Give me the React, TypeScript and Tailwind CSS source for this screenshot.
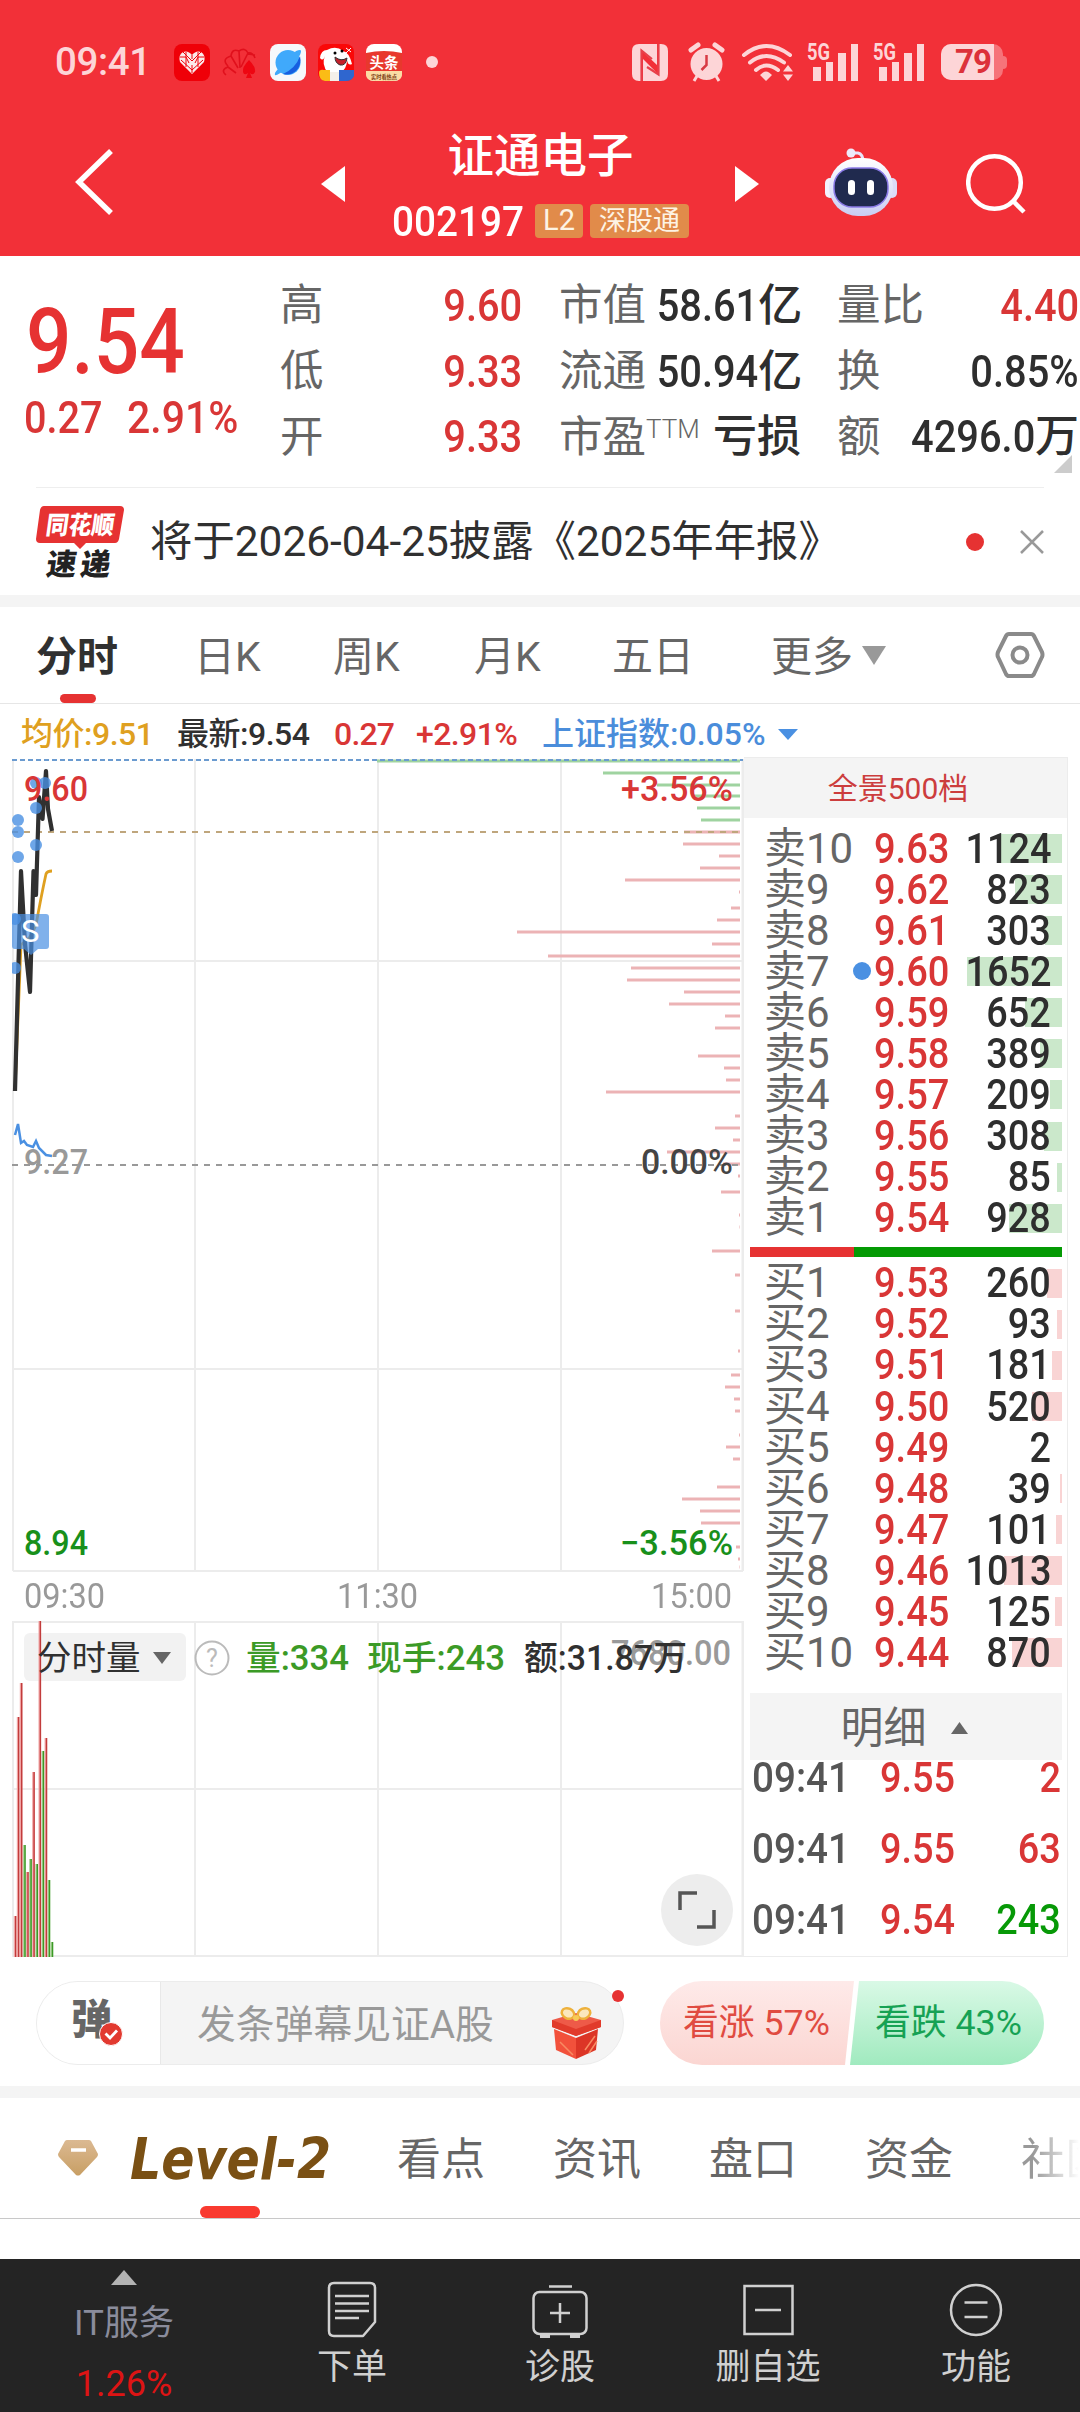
import type { ReactNode } from "react";
import clsx from "clsx";

const sells = [
  { name: "卖10", price: "9.63", qty: 1124 },
  { name: "卖9", price: "9.62", qty: 823 },
  { name: "卖8", price: "9.61", qty: 303 },
  { name: "卖7", price: "9.60", qty: 1652, mark: true },
  { name: "卖6", price: "9.59", qty: 652 },
  { name: "卖5", price: "9.58", qty: 389 },
  { name: "卖4", price: "9.57", qty: 209 },
  { name: "卖3", price: "9.56", qty: 308 },
  { name: "卖2", price: "9.55", qty: 85 },
  { name: "卖1", price: "9.54", qty: 928 },
];

const buys = [
  { name: "买1", price: "9.53", qty: 260 },
  { name: "买2", price: "9.52", qty: 93 },
  { name: "买3", price: "9.51", qty: 181 },
  { name: "买4", price: "9.50", qty: 520 },
  { name: "买5", price: "9.49", qty: 2 },
  { name: "买6", price: "9.48", qty: 39 },
  { name: "买7", price: "9.47", qty: 101 },
  { name: "买8", price: "9.46", qty: 1013 },
  { name: "买9", price: "9.45", qty: 125 },
  { name: "买10", price: "9.44", qty: 870 },
];

const trades = [
  { time: "09:41", price: "9.55", qty: "2", color: "text-[#d93636]" },
  { time: "09:41", price: "9.55", qty: "63", color: "text-[#d93636]" },
  { time: "09:41", price: "9.54", qty: "243", color: "text-[#079907]" },
];

// [y, left x] of every resting-order line, all end at x = 727
const greenDepth = [
  [2, 364], [14, 590], [26, 644], [37, 680], [49, 684], [61, 688],
];
const redDepth = [
  [73, 671], [85, 670], [97, 706], [109, 687], [121, 612], [133, 726],
  [149, 718], [161, 704], [173, 504], [185, 699], [197, 535], [209, 618],
  [221, 614], [233, 671], [245, 656], [257, 712], [269, 702], [297, 685],
  [309, 711], [321, 713], [333, 593], [357, 722], [369, 702], [381, 720],
  [393, 654], [405, 710], [417, 725], [433, 708], [456, 726], [468, 726.5],
  [492, 699], [516, 722], [552, 722], [592, 725], [616, 718], [628, 712],
  [640, 721], [652, 722], [676, 726], [688, 713], [700, 720], [728, 704],
  [740, 669], [752, 687], [764, 688], [788, 723], [800, 725], [808, 726.5],
];

// [x, top y, is up]
const volumes: [number, number, boolean][] = [
  [2, 295, true],
  [5, 96, true],
  [8, 62, true],
  [11.3, 224, false],
  [14.3, 251, true],
  [17.4, 238, false],
  [20.4, 151, true],
  [23.6, 243, false],
  [26.7, 0, true],
  [29.8, 130, false],
  [32.8, 117, true],
  [35.8, 259, false],
  [38.8, 321, false],
];

const StatusBar = () => (
  <div className="flex h-[124px] items-center pl-[55px] pr-[73px] text-[#fdd5d7]">
    <span className="w-[119px] text-[38.500px] font-medium tracking-[-0.400px]">09:41</span>
    <div className="flex gap-3">
      <svg width="36" height="37" viewBox="0 0 36 37">
        <rect width="36" height="37" rx="8" fill="#ef0008" />
        <path d="M18 30 6 18q-2-7 3-10 5-2 9 3 4-5 9-3 5 3 3 10Z" fill="#fbe9ea" />
        <path d="m9 8 9 9 9-9M7 16l11 10 11-10M12 8v15M24 8v15M18 11v4M18 21v8M6 13h6l3 6M30 13h-6l-3 6" stroke="#ef0008" strokeWidth="1" fill="none" />
      </svg>
      <svg width="36" height="37" viewBox="0 0 36 37" fill="none" stroke="#e0101c" strokeWidth="1.600">
        <path d="M4 31q-6-5 2-8l8 6M6 22q-7-7 3-10l7 12M9 12q1-8 8-5l1 17M17 7q6-4 9 2l-7 14M25 9q6-1 8 5M26 10l7 1" />
        <path d="M27 16q7 7 6 12-2 4-5 1l2 5h-6l2-5q-4 3-5-1-1-5 6-12Z" fill="#ee0612" stroke="none" />
      </svg>
      <svg width="36" height="37" viewBox="0 0 36 37">
        <rect width="36" height="37" rx="8" fill="#f6f8fb" />
        <circle cx="18" cy="18.500" r="12.500" fill="#40a9fb" />
        <path d="M30 12q2 9-4 15-6 5-13 3Q26 24 30 12Z" fill="#175fe0" />
        <path d="M26 7q5-2 5 0 0 7-15 18Q7 32 5 31q-1-2 3-6" fill="#40a9fb" />
      </svg>
      <svg width="36" height="37" viewBox="0 0 36 37">
        <rect width="36" height="37" rx="8" fill="#fa0808" />
        <path d="M2 14q1-8 7-8 9-5 16 1 6 1 9 13-4 2-5-4 0 9-7 13H10Q3 20 7 12q-2 6-5 2Z" fill="#fff" />
        <path d="M17 13q6 5 12 1-1 8-7 7-5-2-5-8Z" fill="#c4202a" stroke="#333" />
        <circle cx="17" cy="9" r="1.500" /><circle cx="24" cy="7" r="1.500" />
        <path d="M1 29q0-4 5-3h6v11H7q-6-1-6-8Z" fill="#fbbc16" />
        <path d="M12 28h9v9h-9Z" fill="#f4f0ea" />
        <path d="M21 26h15v6q-2 5-8 5h-7Z" fill="#2f66cf" />
        <path d="m28 4 5 4m0-4-5 5" stroke="#fff" />
      </svg>
      <svg width="36" height="37" viewBox="0 0 36 37">
        <rect width="36" height="37" rx="8" fill="#fff" />
        <path d="M0 9q18-4 36 0v18H0Z" fill="#e8382d" />
        <path d="M0 27h36v3q0 7-8 7H8q-8 0-8-7Z" fill="#fbdca4" />
        <text x="3.500" y="24" fontSize="14.500" fontWeight="700" fill="#fff">头条</text>
        <text x="5" y="34.500" fontSize="5.200" fontWeight="700" fill="#7a3a12">实时看热点</text>
      </svg>
    </div>
    <div className="ml-6 h-3 w-3 rounded-full bg-[#fdd5d7]" />
    <svg className="ml-auto" width="36" height="37" viewBox="0 0 36 37">
      <path d="M7 0h18v21L9 6v31H7q-7 0-7-7V7q0-7 7-7Zm22 0q7 0 7 7v23q0 7-7 7H11V15l16 16V0Z" fill="currentColor" />
      <path d="M9.500 37V6.500L20 15M26.500 0v30.500L15 23" stroke="#e8404a" strokeWidth="2.200" fill="none" />
    </svg>
    <svg className="ml-5" width="37" height="40" viewBox="0 0 37 40">
      <circle cx="18.500" cy="22" r="16" fill="currentColor" />
      <path d="m3 8 7-5M34 8l-7-5" stroke="currentColor" strokeWidth="5" strokeLinecap="round" />
      <path d="m9 34-3 5M28 34l3 5" stroke="currentColor" strokeWidth="3" />
      <path d="M18.500 13v10l-5 5" stroke="#d83a44" strokeWidth="2.500" fill="none" />
    </svg>
    <svg className="ml-4" width="53" height="38" viewBox="0 0 53 38">
      <path d="M3 12q22-18 46 0M9 19.500q16-13 34 0M15 27q10-9 22 0" stroke="currentColor" strokeWidth="4" strokeLinecap="round" fill="none" />
      <path d="m19 32 3-2.500q3-1.800 6 0l3 2.500-6 6ZM47 22l5 6.500H42ZM47 38l5-6.500H42Z" fill="currentColor" />
    </svg>
    <Signal className="ml-[13px]" />
    <Signal className="ml-[14px]" />
    <div className="ml-4 flex items-center">
      <div className="flex h-9 w-[62px] overflow-hidden rounded-[10px] bg-[#f67379]">
        <div className="w-[53px] bg-[#fdd5d7] pl-[11px] text-center text-[33px] font-bold leading-[36px] tracking-[-1px] text-[#dc3139]">
          79
        </div>
      </div>
      <div className="h-[13px] w-1 rounded-r bg-[#f67379]" />
    </div>
  </div>
);

const Signal = ({ className }: { className?: string }) => (
  <svg className={clsx("overflow-visible", className)} width="52" height="40" viewBox="0 0 52 40" fill="currentColor">
    <text x="0" y="17.500" fontSize="23" fontWeight="700" textLength="23" lengthAdjust="spacingAndGlyphs">5G</text>
    <path d="M6 25h8v14H6ZM19 20h7v19h-7ZM31 11h8v28h-8ZM44 2h7v37h-7Z" />
  </svg>
);

const Header = () => (
  <div className="flex h-[132px] items-start text-white">
    <svg className="ml-[74px] mt-[24px]" width="40" height="68" viewBox="0 0 40 68">
      <path d="M37 3 5 34l32 31" stroke="white" strokeWidth="5.500" fill="none" />
    </svg>
    <svg className="ml-[207px] mt-[42px]" width="24" height="36">
      <path d="M24 0v36L0 18Z" fill="white" />
    </svg>
    <div className="ml-[40px] flex w-[311px] flex-col items-center">
      <h1 className="mt-px text-[46.500px] font-medium leading-[62px]">证通电子</h1>
      <div className="mt-[16px] flex h-[36px] w-[297px] items-center">
        <span className="w-[143px] shrink-0 origin-left scale-x-[0.900] text-[43px] font-medium">002197</span>
        <span className="mr-[7px] flex h-[34px] w-[48px] shrink-0 items-center justify-center rounded bg-[#e18b4a] text-[29px] text-[#fdf3e4]">
          L2
        </span>
        <span className="flex h-[34px] w-[99px] shrink-0 items-center justify-center rounded bg-[#e18b4a] text-[27px] text-[#fdf3e4]">
          深股通
        </span>
      </div>
    </div>
    <svg className="ml-[39px] mt-[42px]" width="24" height="36">
      <path d="M0 0v36L24 18Z" fill="white" />
    </svg>
    <svg className="ml-[66px] mt-[24px]" width="72" height="70" viewBox="0 0 72 70">
      <defs>
        <linearGradient id="robot" x1="0" y1="0" x2="0" y2="1">
          <stop offset="0" stopColor="#ffffff" />
          <stop offset="1" stopColor="#c9cdf3" />
        </linearGradient>
      </defs>
      <path d="M26 5h7q5 1 5 9" stroke="#e8e6fb" strokeWidth="3" fill="none" />
      <circle cx="26" cy="5" r="4.500" fill="#eeeafa" />
      <rect x="0" y="30" width="10" height="20" rx="5" fill="#f3f2fd" />
      <rect x="62" y="30" width="10" height="20" rx="5" fill="#dcdcf8" />
      <rect x="4" y="10" width="64" height="58" rx="29" fill="url(#robot)" />
      <rect x="9" y="20" width="54" height="39" rx="18" fill="#202a4e" stroke="#8a7ae6" strokeWidth="1.500" />
      <rect x="23" y="32" width="7" height="15" rx="3.500" fill="white" />
      <rect x="42" y="32" width="7" height="15" rx="3.500" fill="white" />
    </svg>
    <svg className="ml-[69px] mt-[29px]" width="60" height="61" viewBox="0 0 60 61" stroke="white" strokeWidth="4.500" fill="none">
      <circle cx="28.500" cy="29.500" r="26.300" />
      <path d="m47 48 11 11" />
    </svg>
  </div>
);

type StatProps = { label: string; value?: string; unit?: string; red?: boolean; sup?: string };

const Stat = ({ label, value, unit, red, sup }: StatProps) => (
  <div className="flex h-[65.700px] items-center justify-between whitespace-nowrap">
    <span className="text-[43.500px] text-[#666]">
      {label}
      {sup && <sup className="relative -top-[14px] align-baseline text-[26px] font-light">{sup}</sup>}
    </span>
    <span className={clsx("flex text-[44px] font-medium", red ? "text-[#d93636]" : "text-[#2e2e2e]")}>
      {value && <span className="origin-right scale-x-[0.905]">{value}</span>}
      {unit}
    </span>
  </div>
);

const Quote = () => (
  <div className="relative flex h-[231px] pt-[17px]">
    <div className="w-[280px] pl-[24px] font-medium text-[#e63232]">
      <div className="ml-[2px] mt-[22px] w-fit origin-left scale-x-[0.890] text-[90px] leading-[96px]">9.54</div>
      <div className="flex text-[44px] leading-[54px] text-[#d93636]">
        <span className="w-[103px] origin-left scale-x-[0.900]">0.27</span>
        <span className="origin-left scale-x-[0.930]">2.91%</span>
      </div>
    </div>
    <div className="w-[242px]">
      <Stat label="高" value="9.60" red />
      <Stat label="低" value="9.33" red />
      <Stat label="开" value="9.33" red />
    </div>
    <div className="ml-[37px] w-[242px]">
      <Stat label="市值" value="58.61" unit="亿" />
      <Stat label="流通" value="50.94" unit="亿" />
      <Stat label="市盈" unit="亏损" sup="TTM" />
    </div>
    <div className="ml-[36px] w-[242px]">
      <Stat label="量比" value="4.40" red />
      <Stat label="换" value="0.85%" />
      <Stat label="额" value="4296.0" unit="万" />
    </div>
    <svg className="absolute left-[1054px] top-[199px]" width="18" height="18">
      <path d="M18 0v18H0Z" fill="#ccc" />
    </svg>
  </div>
);

const Notice = () => (
  <div className="mx-[36px] flex h-[108px] items-center border-t border-[#eee]">
    <svg className="overflow-visible" width="90" height="72" viewBox="0 0 90 72">
      <path d="M8 0h76q4 0 4 4l-5 29q-1 4-4 4H50l-6 6-6-6H4q-4 0-4-4L4 4q1-4 4-4Z" fill="#e63232" />
      <text x="13" y="28" fontSize="25" fontWeight="900" fill="white" textLength="68" lengthAdjust="spacingAndGlyphs" transform="skewX(-8)">同花顺</text>
      <text x="19" y="69" fontSize="30" fontWeight="900" fill="#222" textLength="64" transform="skewX(-8)">速递</text>
    </svg>
    <p className="ml-[24px] mt-[2px] text-[42.400px] leading-none text-[#303030]">将于2026-04-25披露《2025年年报》</p>
    <div className="ml-auto h-[18px] w-[18px] rounded-full bg-[#e63232]" />
    <svg className="ml-[36px]" width="24" height="24" stroke="#999" strokeWidth="2.500">
      <path d="m1 1 22 22M23 1 1 23" />
    </svg>
  </div>
);

const ChartTabs = () => (
  <div className="flex h-[97px] border-b border-[#e6e6e6] pl-[36px] text-[41px] leading-[100px] text-[#666]">
    <div className="flex w-[158px] flex-col font-bold text-[#303030]">
      <span className="h-[87px]">分时</span>
      <div className="ml-6 h-[9px] w-9 rounded-full bg-[#e63232]" />
    </div>
    <span className="w-[139px]">日K</span>
    <span className="w-[141px]">周K</span>
    <span className="w-[138px]">月K</span>
    <span className="w-[159px]">五日</span>
    <span>更多</span>
    <svg className="ml-[9px] mt-[39px]" width="24" height="19">
      <path d="M0 0h24L12 19Z" fill="#999" />
    </svg>
    <svg className="ml-[109px] mt-[24px]" width="50" height="48" viewBox="0 0 50 48" fill="none" stroke="#8a8a8a" strokeWidth="4">
      <path d="M14 3h22q2 0 3 2l8 16q1 3 0 5l-8 17q-1 2-3 2H14q-2 0-3-2L3 26q-1-2 0-5l8-16q1-2 3-2Z" />
      <circle cx="25" cy="24" r="7.500" />
    </svg>
  </div>
);

const InfoRow = () => (
  <div className="flex h-[53px] items-center pl-[21px] pt-[7px] text-[32px] font-medium">
    <span className="w-[156px] tracking-[-0.500px] text-[#dfa020]">均价:9.51</span>
    <span className="w-[157px] tracking-[-0.500px] text-[#303030]">最新:9.54</span>
    <span className="w-[82px] tracking-[-0.800px] text-[#d93636]">0.27</span>
    <span className="w-[126px] tracking-[-0.600px] text-[#d93636]">+2.91%</span>
    <span className="w-[236px] text-[#4a8ddb]">上证指数:0.05%</span>
    <svg width="20" height="11">
      <path d="M0 0h20L10 11Z" fill="#4a90e2" />
    </svg>
  </div>
);

const ChartText = ({ x, y, width, fill, children }: { x: number; y: number; width: number; fill: string; children: string }) => (
  <text x={x} y={y} fill={fill} textLength={width} lengthAdjust="spacingAndGlyphs">
    {children}
  </text>
);

const PriceChart = () => (
  <svg className="block" width="732" height="816" viewBox="-1 -1 732 816" fontWeight="500" fontSize="34.500">
    <g stroke="#ececec" strokeWidth="2">
      <path d="M0 0V812M182 0V812M365 0V812M548 0V812M0 812H730M0 202H730M0 610H730" />
      <path d="M730 0V812" strokeWidth="3" />
    </g>
    <g stroke="#9fd3a0" strokeWidth="3">
      {greenDepth.map(([y, x]) => (
        <line key={y} x1={x} x2="727" y1={y} y2={y} />
      ))}
    </g>
    <g stroke="#ecb3b5" strokeWidth="3">
      {redDepth.map(([y, x]) => (
        <line key={y} x1={x} x2="727" y1={y} y2={y} />
      ))}
    </g>
    <path d="M-1 1H730" stroke="#6b9bd0" strokeWidth="2" strokeDasharray="5 3" />
    <path d="M-1 73H727" stroke="#bfa67c" strokeWidth="2" strokeDasharray="6 6" />
    <path d="M-1 406H727" stroke="#999" strokeWidth="2" strokeDasharray="6 6" />
    <path d="M2 332 8 186 17 178 23 166Q28 138 33 115 34 112 39 112" stroke="#dfa020" strokeWidth="2.800" fill="none" />
    <path d="M2 332 8 112 12 185 17 233 20.500 112 23 136 26 38 29.500 60 33 12 35 50 39 72" stroke="#303030" strokeWidth="4.200" strokeLinejoin="round" fill="none" />
    <path d="m2 376 3-11 3 19 3-2 3 4 6 2 3-6 3 7 7 7 6 1" stroke="#4a90e2" strokeWidth="2.500" fill="none" />
    <g fill="#4a90e2" fillOpacity="0.800">
      {[[5, 61], [5, 73], [5, 98], [23, 49], [23, 86], [23, 24], [32, 24], [2, 160], [2, 209]].map(([x, y]) => (
        <circle key={`${x}-${y}`} cx={x} cy={y} r="6" />
      ))}
    </g>
    <path d="M2 155H33q3 0 3 3v29q0 3-3 3h-8l-7 6-7-6H2q-3 0-3-3V158q0-3 3-3Z" fill="#4a90e2" fillOpacity="0.700" />
    <text x="8" y="183" fontSize="31" fontWeight="400" fill="white">S</text>
    <ChartText x={11} y={42} width={64} fill="#d93636">9.60</ChartText>
    <ChartText x={608} y={42} width={112} fill="#d93636">+3.56%</ChartText>
    <ChartText x={11} y={415} width={64} fill="#999">9.27</ChartText>
    <ChartText x={628} y={415} width={92} fill="#444">0.00%</ChartText>
    <ChartText x={11} y={796} width={64} fill="#18901b">8.94</ChartText>
    <ChartText x={607} y={796} width={113} fill="#18901b">−3.56%</ChartText>
  </svg>
);

const VolumeChart = () => (
  <div className="relative h-[336px]">
    <svg className="block" width="732" height="336" viewBox="-1 0 732 336">
      <path d="M0 0V336M182 0V336M365 0V336M548 0V336M0 1H730M0 168H730M0 335H730" stroke="#ececec" strokeWidth="2" fill="none" />
      <path d="M730 0V336" stroke="#ececec" strokeWidth="3" />
      <rect x="11" y="12" width="162" height="48" rx="6" fill="#f2f2f2" />
      {volumes.map(([x, y, up]) => (
        <g key={x}>
          <rect x={x - 1.2} y={y} width="2.600" height={336 - y} fill={up ? "#f0a3a3" : "#a5cf91"} />
          <rect x={x} y={y} width="1.400" height={336 - y} fill={up ? "#c23c3c" : "#3b9a26"} />
        </g>
      ))}
      <path d="M140 31h18l-9 12Z" fill="#666" />
      <circle cx="199" cy="37" r="16.500" fill="none" stroke="#bbb" strokeWidth="2" />
      <text x="193" y="46" fontSize="25" fill="#bbb">?</text>
      <g fontSize="34.500" fontWeight="500">
        <ChartText x={598} y={44} width={120} fill="#999">7680.00</ChartText>
        <text x="24" y="49" fill="#303030" fontWeight="400">分时量</text>
        <ChartText x={233} y={49} width={103} fill="#3b9a26">量:334</ChartText>
        <ChartText x={354} y={49} width={138} fill="#3b9a26">现手:243</ChartText>
        <ChartText x={511} y={49} width={163} fill="#303030">额:31.87万</ChartText>
      </g>
    </svg>
    <div className="absolute left-[649px] top-[253px] flex h-[72px] w-[72px] items-center justify-center rounded-full bg-[#ededed]">
      <svg width="38" height="38" stroke="#555" strokeWidth="3.500" fill="none">
        <path d="M2 19V2h17M19 36h17V19" />
      </svg>
    </div>
  </div>
);

type Level = { name: string; price: string; qty: number; mark?: boolean };

const LevelRow = ({ name, price, qty, mark, barClass }: Level & { barClass: string }) => (
  <div className="relative flex h-[41.080px] items-center whitespace-nowrap text-[42px] font-medium leading-none">
    <div className={clsx("absolute right-[5px] top-[6px] h-[29px]", barClass)} style={{ width: qty < 10 ? 0 : qty * 0.0575 }} />
    {mark && <div className="absolute left-[109px] top-[11px] h-[18px] w-[18px] rounded-full bg-[#4a90e2]" />}
    <span className="relative w-[111px] shrink-0 pl-[20px] font-normal text-[#666]">{name}</span>
    <span className="relative ml-[19px] origin-left scale-x-[0.905] text-[#d93636]">{price}</span>
    <span className="absolute right-[16px] origin-right scale-x-[0.900] text-[#2e2e2e]">{qty}</span>
  </div>
);

const OrderBook = () => (
  <div className="-mt-px h-[1200px] w-[324px] border border-l-0 border-[#ececec]">
    <div className="flex h-[60px] items-center justify-center bg-[#f4f4f4] pr-[15px] text-[30px] text-[#cc3d3d]">
      全景500档
    </div>
    <div className="mt-[10px]">
      {sells.map((row) => (
        <LevelRow key={row.name} {...row} barClass="bg-[#cbe8cb]" />
      ))}
    </div>
    <div className="ml-[6px] mr-[5px] mt-[8px] flex h-[10px]">
      <div className="w-[104px] bg-[#e63232]" />
      <div className="flex-1 bg-[#049a04]" />
    </div>
    <div className="mt-[6px]">
      {buys.map((row) => (
        <LevelRow key={row.name} {...row} barClass="bg-[#f9d4d4]" />
      ))}
    </div>
    <div className="ml-[6px] mr-[5px] mt-[19px] flex h-[67px] items-center justify-center gap-[24px] bg-[#f4f4f4] pr-[4px] pt-1 text-[43px] text-[#666]">
      明细
      <svg width="17" height="12">
        <path d="M0 12h17L8.500 0Z" fill="#666" />
      </svg>
    </div>
    <div className="-mt-[18px]">
      {trades.map((t, i) => (
        <div key={i} className="flex h-[71px] items-center pl-[8px] pr-[6px] text-[42px] font-medium">
          <span className="w-[128px] origin-left scale-x-[0.920] text-[#555]">{t.time}</span>
          <span className="origin-left scale-x-[0.900] text-[#d93636]">{t.price}</span>
          <span className={clsx("ml-auto origin-right scale-x-[0.900]", t.color)}>{t.qty}</span>
        </div>
      ))}
    </div>
  </div>
);

const Danmu = () => (
  <div className="flex h-[129px] items-start pl-[36px] pt-[24px]">
    <div className="relative flex h-[84px] w-[588px] rounded-full border border-[#ececec] bg-[#f4f4f4]">
      <div className="relative w-[124px] rounded-l-full border-r border-[#e8e8e8] bg-white pl-[34px] text-[41px] font-black leading-[76px] text-[#666]">
        弹
        <svg className="absolute left-[62px] top-[40px]" width="24" height="24" viewBox="0 0 24 24">
          <circle cx="12" cy="12" r="11.500" fill="#e23a30" stroke="white" />
          <path d="m6.500 11.500 4.500 4.500 7-7.500" stroke="white" strokeWidth="2.800" fill="none" />
        </svg>
      </div>
      <span className="ml-[36px] text-[38.800px] leading-[85px] text-[#999]">发条弹幕见证A股</span>
      <svg className="absolute left-[515px] top-[23px]" width="50" height="54" viewBox="0 0 50 54">
        <path d="M2 24 24 33v21L4 45Z" fill="#f2513b" />
        <path d="M46 24 24 33v21l20-9Z" fill="#dc3526" />
        <path d="M0 15 24 8l25 7v7L24 31 0 22Z" fill="#ee5a48" />
        <path d="M0 15 24 24l25-9v7L24 31 0 22Z" fill="#e13b2b" />
        <path d="m8 37 13 13M33 45l10-14M37 48l8-12" stroke="#f88a62" strokeWidth="1.500" />
        <ellipse cx="16" cy="8.500" rx="6.500" ry="5" transform="rotate(25 16 8.500)" fill="#fbe7bd" stroke="#eeb13c" strokeWidth="2.500" />
        <ellipse cx="32" cy="8.500" rx="6.500" ry="5" transform="rotate(-25 32 8.500)" fill="#fbe7bd" stroke="#eeb13c" strokeWidth="2.500" />
        <circle cx="24" cy="13" r="3" fill="#f7c956" />
      </svg>
      <div className="absolute left-[575px] top-[8px] h-3 w-3 rounded-full bg-[#e63232]" />
    </div>
    <div className="ml-[36px] flex h-[84px] w-[384px] overflow-hidden rounded-full text-[35.800px] leading-[84px]">
      <div className="w-[194px] bg-gradient-to-b from-[#feeae9] to-[#fbd6d2] pl-[23px] text-[#e04b41] [clip-path:polygon(0_0,100%_0,185px_100%,0_100%)]">
        看涨 57%
      </div>
      <div className="-ml-[4px] w-[194px] bg-gradient-to-b from-[#d9f9e6] to-[#a0eabf] pl-[25px] text-[#16a254] [clip-path:polygon(9px_0,100%_0,100%_100%,0_100%)]">
        看跌 43%
      </div>
    </div>
  </div>
);

const BottomTabs = () => (
  <div className="relative flex h-[121px] border-b border-[#c8c8c8] text-[44px] leading-[125px] text-[#666]">
    <svg className="ml-[58px] mt-[42px]" width="40" height="36">
      <defs>
        <linearGradient id="gem" x1="0" y1="0" x2="0" y2="1">
          <stop offset="0" stopColor="#dbb992" />
          <stop offset="1" stopColor="#c89f64" />
        </linearGradient>
      </defs>
      <path d="M9 0h22q1 0 2 1l7 13q0 2-1 3L22 35q-2 1-4 0L1 17q-1-1-1-3L7 1q1-1 2-1Z" fill="url(#gem)" />
      <path d="M13 10h15" stroke="white" strokeWidth="3.500" />
    </svg>
    <div className="ml-[32px] flex w-[267px] flex-col">
      <svg width="204" height="108" className="overflow-visible font-['DejaVu_Sans']">
        <text x="0" y="81" fontSize="57" fontWeight="700" fontStyle="italic" fill="#7a5014" textLength="201" lengthAdjust="spacingAndGlyphs">
          Level-2
        </text>
      </svg>
      <div className="ml-[70px] h-[12px] w-[60px] rounded-full bg-[#f93a30]" />
    </div>
    {["看点", "资讯", "盘口", "资金"].map((tab) => (
      <span key={tab} className="w-[156px] shrink-0">{tab}</span>
    ))}
    <span className="w-[58px] overflow-hidden whitespace-nowrap bg-gradient-to-r from-[#999] from-20% to-[#fff] bg-clip-text text-transparent">
      社区
    </span>
  </div>
);

const NavItem = ({ label, children }: { label: string; children: ReactNode }) => (
  <div className="flex flex-1 flex-col items-center pt-[21px] text-[35px] leading-[50px] text-[#d0d0d0]">
    <svg width="56" height="58" viewBox="0 0 56 58" fill="none" stroke="currentColor" strokeWidth="2.500">
      {children}
    </svg>
    <span className="mt-[5px]">{label}</span>
  </div>
);

const BottomNav = () => (
  <div className="flex h-[153px] bg-[#242424]">
    <div className="flex w-[248px] flex-col items-center pt-[11px]">
      <svg width="26" height="15">
        <path d="M0 15h26L13 0Z" fill="#b3b3b3" />
      </svg>
      <span className="mt-[12px] text-[35px] leading-[54px] text-[#8a8c9c]">IT服务</span>
      <span className="mt-[6px] text-[36px] leading-[54px] text-[#dd1414]">1.26%</span>
    </div>
    <NavItem label="下单">
      <path d="M10 3h36q5 0 5 5v34L39 56H10q-5 0-5-5V8q0-5 5-5Z" strokeLinejoin="round" />
      <path d="M11 16h34M11 23.500h34M11 31h34M11 38h24" />
    </NavItem>
    <NavItem label="诊股">
      <rect x="1.500" y="12" width="53" height="42" rx="6" />
      <path d="M17 6.500h23M28 23v20M18 33h20" />
      <path d="M8 56h10M38 56h10" strokeWidth="4" />
    </NavItem>
    <NavItem label="删自选">
      <path d="M4.500 6h48v48h-48ZM15 30h26" />
    </NavItem>
    <NavItem label="功能">
      <circle cx="28" cy="30" r="25" />
      <path d="M16.500 22.500h23M16.500 37h23" />
    </NavItem>
  </div>
);

const App = () => {
  return (
    <div className="flex h-[2412px] w-[1080px] flex-col overflow-hidden bg-white font-[Roboto,'Noto_Sans_CJK_SC',sans-serif]">
      <div className="h-[256px] bg-[#f23038]">
        <StatusBar />
        <Header />
      </div>
      <Quote />
      <Notice />
      <div className="h-3 bg-[#f4f4f4]" />
      <ChartTabs />
      <InfoRow />
      <div className="flex h-[1200px] pl-[12px] pt-px">
        <div className="w-[732px]">
          <PriceChart />
          <div className="flex h-[47px] items-center justify-between pl-[12px] pr-[12px] text-[35px] text-[#999]">
            <span className="origin-left scale-x-[0.930]">09:30</span>
            <span className="scale-x-[0.930]">11:30</span>
            <span className="origin-right scale-x-[0.930]">15:00</span>
          </div>
          <VolumeChart />
        </div>
        <OrderBook />
      </div>
      <Danmu />
      <div className="h-3 bg-[#f4f4f4]" />
      <BottomTabs />
      <div className="h-[40px]" />
      <BottomNav />
    </div>
  );
};

export default App;
